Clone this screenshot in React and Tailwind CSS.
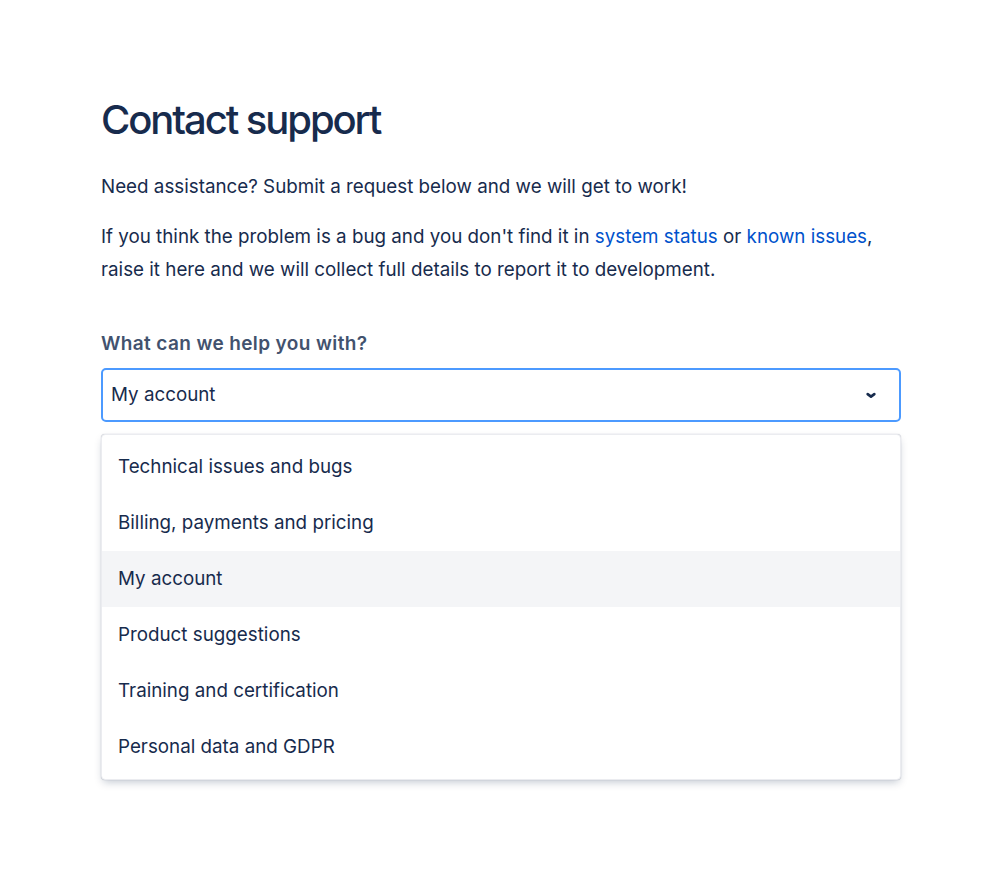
import { useState } from 'react';

const options = [
    'Technical issues and bugs',
    'Billing, payments and pricing',
    'My account',
    'Product suggestions',
    'Training and certification',
    'Personal data and GDPR',
];

export default function App() {
    const [selected, setSelected] = useState('My account');

    return (
        <div className="min-h-screen bg-white font-['Inter',sans-serif] text-[#172B4D]">
            <div className="w-[800px] ml-[101px] pt-[96px]">
                <h1 className="text-[40px] leading-[48px] font-medium tracking-[-0.052em]">Contact support</h1>

                <p className="mt-[26px] text-[18.8px] leading-[33px]">
                    Need assistance? Submit a request below and we will get to work!
                </p>
                <p className="mt-[17px] text-[18.8px] leading-[33px]">
                    If you think the problem is a bug and you don't find it in{' '}
                    <a href="#" className="text-[#0052CC]">system status</a> or{' '}
                    <a href="#" className="text-[#0052CC]">known issues</a>,
                    raise it here and we will collect full details to report it to development.
                </p>

                <label className="block mt-[46px] text-[19px] leading-[24px] font-semibold tracking-[0.02em] text-[#42526E]">
                    What can we help you with?
                </label>

                <div className="relative mt-[12px]">
                    {/* Select control */}
                    <button className="w-full h-[54px] flex items-center justify-between pl-[8px] pr-[18px] border-2 border-[#4C9AFF] rounded-[5px] bg-white text-left">
                        <span className="text-[18.8px]">{selected}</span>
                        <svg viewBox="0 0 24 24" className="w-[20px] h-[20px]" fill="none" stroke="#172B4D" strokeWidth="3.2" strokeLinecap="round" strokeLinejoin="round">
                            <path d="M8 11l4 3 4-3" />
                        </svg>
                    </button>

                    {/* Menu */}
                    <ul className="absolute left-0 right-0 top-[66px] py-[4px] bg-white border border-[#EBECF0] rounded-[4px] shadow-[0_4px_8px_-2px_rgba(9,30,66,0.25),0_0_1px_rgba(9,30,66,0.31)]">
                        {options.map((opt) => (
                            <li
                                key={opt}
                                onClick={() => setSelected(opt)}
                                className={`h-[56px] flex items-center px-[16px] text-[18.8px] cursor-pointer ${opt === selected ? 'bg-[#F4F5F7]' : ''}`}
                            >
                                {opt}
                            </li>
                        ))}
                    </ul>
                </div>
            </div>
        </div>
    );
}
